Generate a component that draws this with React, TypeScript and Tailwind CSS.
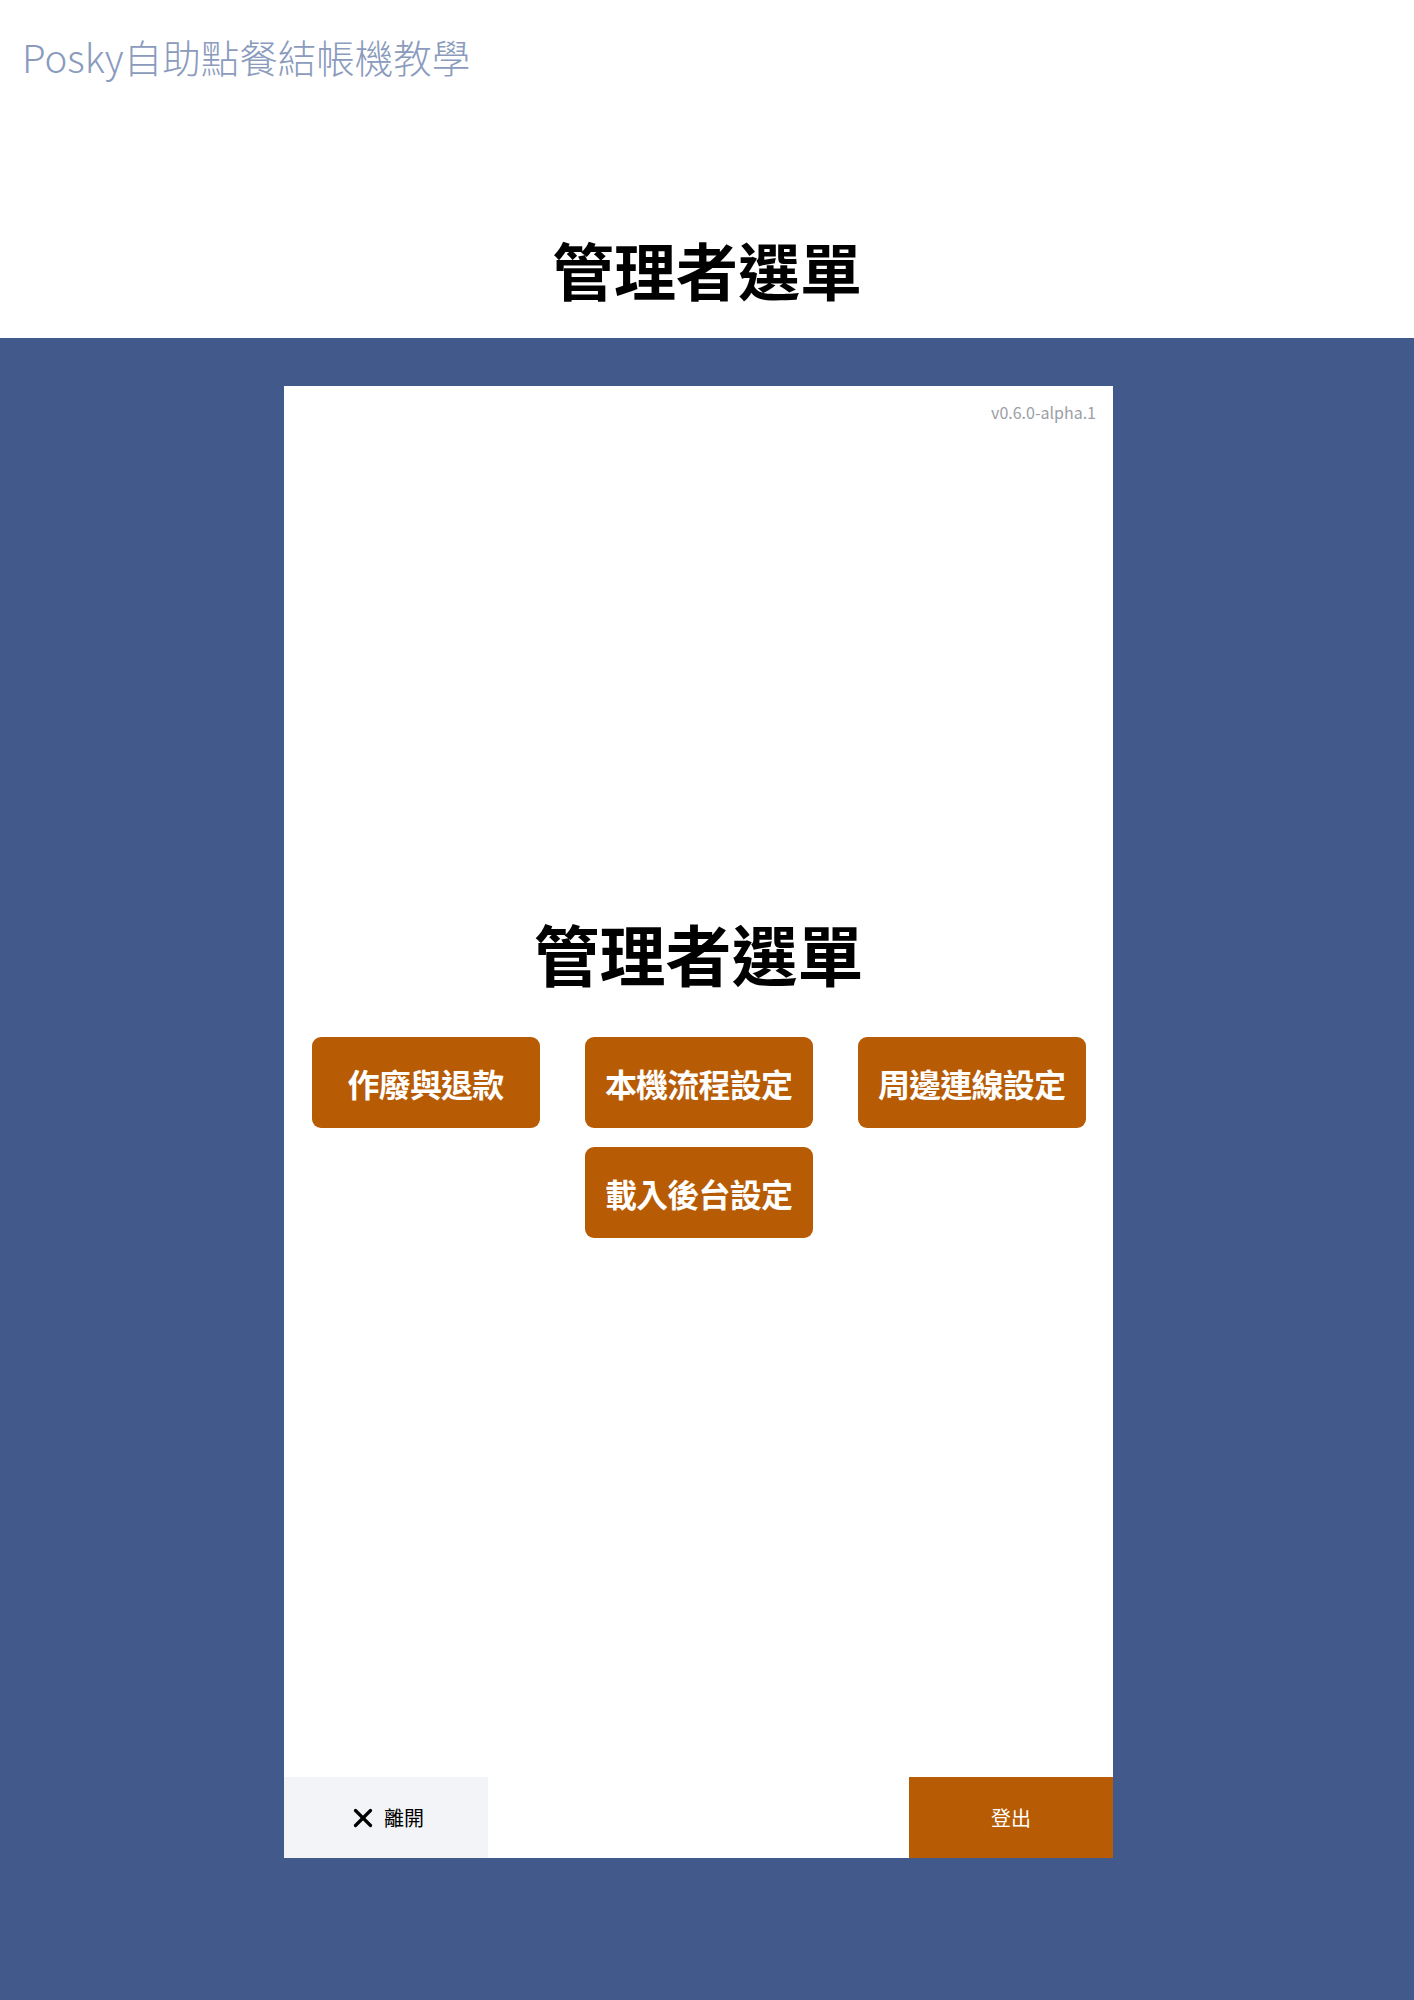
import { X } from "lucide-react"

const menuItems = ["作廢與退款", "本機流程設定", "周邊連線設定", "載入後台設定"]

function MenuButton({ label }: { label: string }) {
  return (
    <button className="w-[228px] h-[91px] rounded-[9px] bg-[#b75b05] text-white text-[32px] font-bold tracking-tight">
      {label}
    </button>
  )
}

export default function App() {
  return (
    <div className="min-h-[2000px] flex flex-col bg-white" style={{ fontFamily: '"Noto Sans CJK TC", "Noto Sans", sans-serif' }}>
      {/* 頁面標題 */}
      <div className="h-[338px] flex flex-col">
        <div className="pl-[22px] pt-[28px] text-[38.5px] font-light text-[#8a9bbd] leading-[56px]">
          Posky自助點餐結帳機教學
        </div>
        <h1 className="mt-[154px] text-center text-[62px] font-bold text-black leading-none">管理者選單</h1>
      </div>

      {/* 模擬畫面 */}
      <div className="flex-1 bg-[#425a8b] pt-[48px] pb-[142px] pl-[284px]">
        <div className="w-[829px] h-[1472px] bg-white flex flex-col">
          <div className="flex justify-end pr-[17px] pt-[16px] text-[16px] font-normal text-[#9a9ea6] leading-5">v0.6.0-alpha.1</div>

          <div className="flex-1 flex flex-col items-center justify-center pb-[42px]">
            <h2 className="text-[66px] font-bold text-black leading-none mb-[52px]">管理者選單</h2>
            <div className="grid grid-cols-3 gap-x-[45px] gap-y-[19px]">
              {menuItems.slice(0, 3).map((item) => (
                <MenuButton key={item} label={item} />
              ))}
              <div />
              <MenuButton label={menuItems[3]} />
            </div>
          </div>

          <div className="h-[81px] flex justify-between">
            <button className="w-[204px] bg-[#f3f4f8] flex items-center justify-center gap-[6px] text-[20px] font-normal text-black">
              <X className="w-[30px] h-[30px]" strokeWidth={2.6} />
              離開
            </button>
            <button className="w-[204px] bg-[#b75b05] text-white text-[20px] font-normal">登出</button>
          </div>
        </div>
      </div>
    </div>
  )
}
